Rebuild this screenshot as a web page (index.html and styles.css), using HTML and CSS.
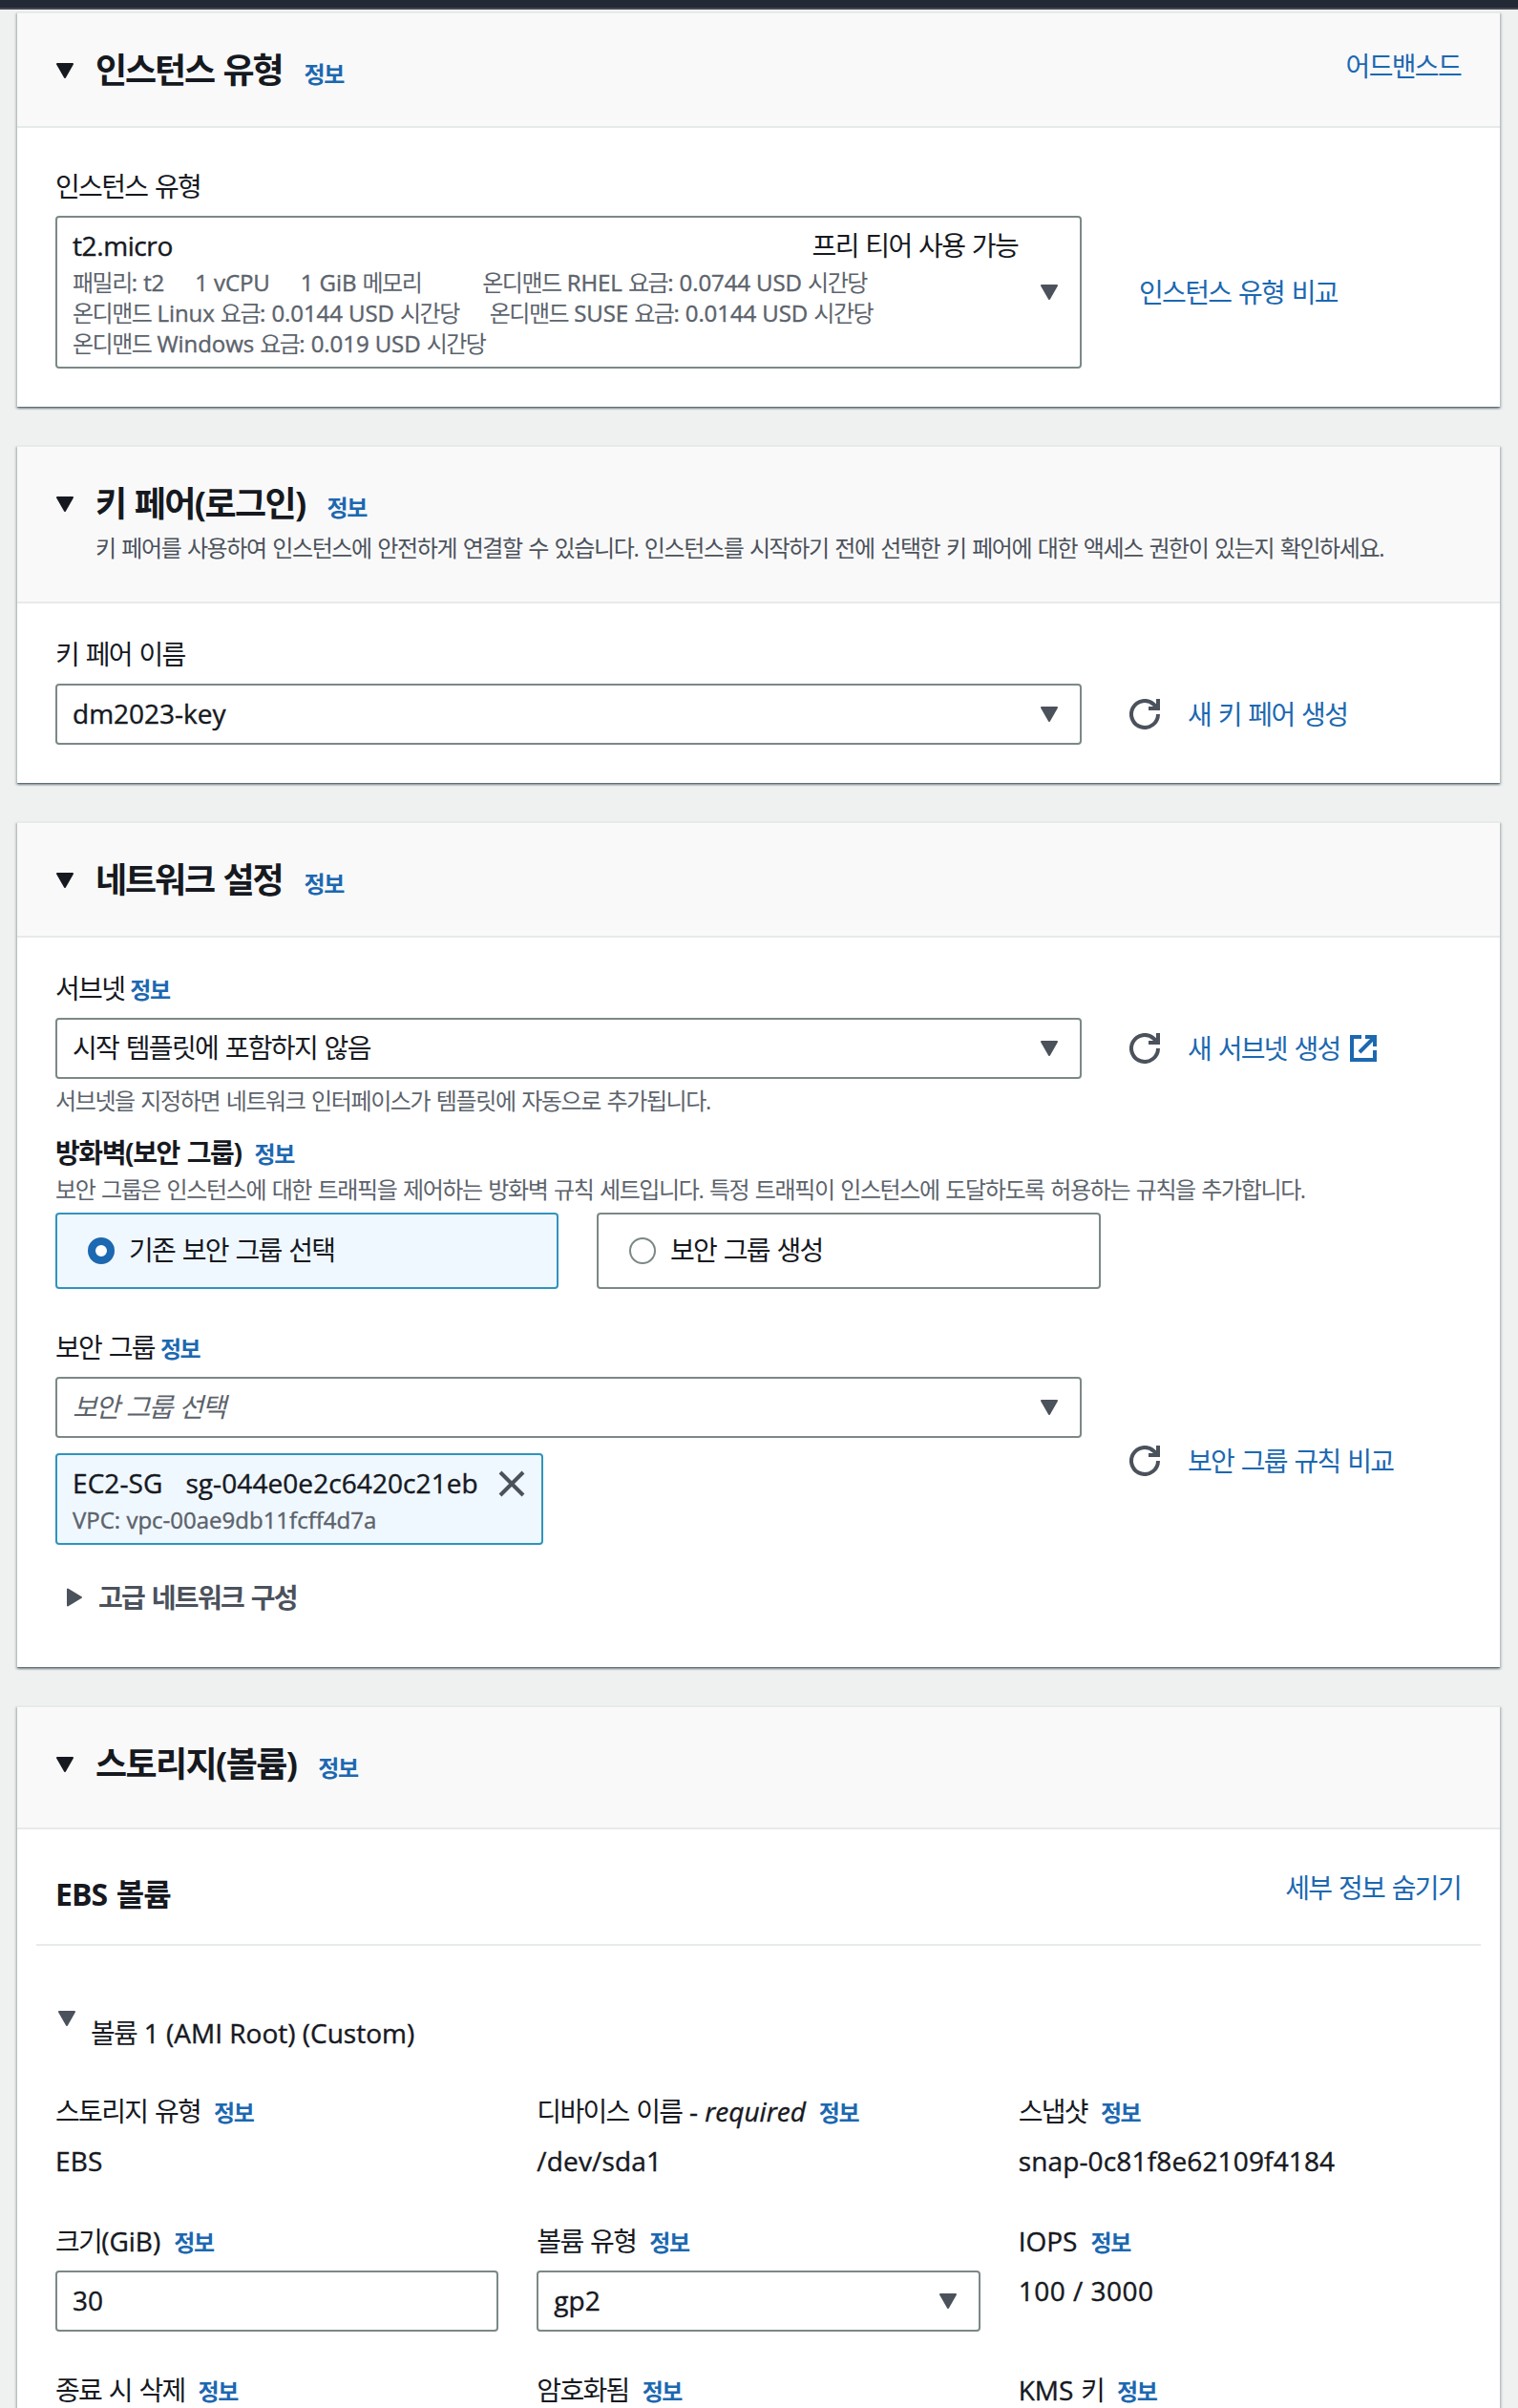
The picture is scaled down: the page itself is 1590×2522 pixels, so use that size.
FILE: index.html
```html
<!DOCTYPE html>
<html lang="ko">
<head>
<meta charset="utf-8">
<title>시작 템플릿 생성</title>
<link rel="stylesheet" href="styles.css">
</head>
<body>
<svg class="sprite" width="0" height="0" aria-hidden="true">
  <symbol id="caret-down" viewBox="0 0 20 16"><path d="M2 1h16l-8 14z" fill="currentColor" stroke="currentColor" stroke-width="2" stroke-linejoin="round"/></symbol>
  <symbol id="caret-right" viewBox="0 0 16 20"><path d="M1 1.5v17L15 10z" fill="currentColor" stroke="currentColor" stroke-width="2" stroke-linejoin="round"/></symbol>
  <symbol id="refresh" viewBox="0 0 32 32"><path d="M30 16a14 14 0 1 1-4.5-10.3L30 10M30 0v10H20" fill="none" stroke="currentColor" stroke-width="4"/></symbol>
  <symbol id="external" viewBox="0 0 28 28"><path d="M12 2H2v24h24V16M16 2h10v10M26 2L10 18" fill="none" stroke="currentColor" stroke-width="4"/></symbol>
  <symbol id="close" viewBox="0 0 28 28"><path d="M2 2l24 24M26 2L2 26" fill="none" stroke="currentColor" stroke-width="4"/></symbol>
</svg>

<div class="topbar"></div>

<main class="page">
  <section class="card">
    <header class="card-header">
      <svg class="caret"><use href="#caret-down"/></svg>
      <h2>인스턴스 유형</h2><a class="info">정보</a>
      <a class="link header-action">어드밴스드</a>
    </header>
    <div class="card-body roomy">
      <div class="label">인스턴스 유형</div>
      <div class="row">
        <div class="select instance">
          <div class="instance-text">
            <div class="instance-title"><span class="en narrow">t2.micro</span><span>프리 티어 사용 가능</span></div>
            <div class="specs"><span>패밀리<span class="en">: t2</span></span><span class="en">1 vCPU</span><span class="wide"><span class="en">1 GiB </span>메모리</span><span>온디맨드<span class="en"> RHEL </span>요금<span class="en">: 0.0744 USD </span>시간당</span></div>
            <div class="specs"><span>온디맨드<span class="en"> Linux </span>요금<span class="en">: 0.0144 USD </span>시간당</span><span>온디맨드<span class="en"> SUSE </span>요금<span class="en">: 0.0144 USD </span>시간당</span></div>
            <div class="specs"><span>온디맨드<span class="en"> Windows </span>요금<span class="en">: 0.019 USD </span>시간당</span></div>
          </div>
          <svg class="caret"><use href="#caret-down"/></svg>
        </div>
        <div class="side"><a class="link">인스턴스 유형 비교</a></div>
      </div>
    </div>
  </section>

  <section class="card">
    <header class="card-header described">
      <svg class="caret"><use href="#caret-down"/></svg>
      <h2 class="mixed">키 페어(로그인)</h2><a class="info">정보</a>
      <p class="header-desc">키 페어를 사용하여 인스턴스에 안전하게 연결할 수 있습니다. 인스턴스를 시작하기 전에 선택한 키 페어에 대한 액세스 권한이 있는지 확인하세요.</p>
    </header>
    <div class="card-body">
      <div class="label">키 페어 이름</div>
      <div class="row">
        <div class="select"><span class="en">dm2023-key</span><svg class="caret"><use href="#caret-down"/></svg></div>
        <div class="side"><svg class="refresh"><use href="#refresh"/></svg><a class="link">새 키 페어 생성</a></div>
      </div>
    </div>
  </section>

  <section class="card">
    <header class="card-header">
      <svg class="caret"><use href="#caret-down"/></svg>
      <h2>네트워크 설정</h2><a class="info">정보</a>
    </header>
    <div class="card-body network">
      <div class="label">서브넷<a class="info tight">정보</a></div>
      <div class="row">
        <div class="select"><span>시작 템플릿에 포함하지 않음</span><svg class="caret"><use href="#caret-down"/></svg></div>
        <div class="side"><svg class="refresh"><use href="#refresh"/></svg><a class="link">새 서브넷 생성</a><svg class="external"><use href="#external"/></svg></div>
      </div>
      <p class="help">서브넷을 지정하면 네트워크 인터페이스가 템플릿에 자동으로 추가됩니다.</p>

      <div class="label strong">방화벽(보안 그룹)<a class="info">정보</a></div>
      <p class="help under-label">보안 그룹은 인스턴스에 대한 트래픽을 제어하는 방화벽 규칙 세트입니다. 특정 트래픽이 인스턴스에 도달하도록 허용하는 규칙을 추가합니다.</p>
      <div class="tiles">
        <div class="tile selected"><span class="radio"></span><span>기존 보안 그룹 선택</span></div>
        <div class="tile"><span class="radio"></span><span>보안 그룹 생성</span></div>
      </div>

      <div class="label">보안 그룹<a class="info tight">정보</a></div>
      <div class="row">
        <div class="group-picker">
          <div class="select"><span class="placeholder">보안 그룹 선택</span><svg class="caret"><use href="#caret-down"/></svg></div>
          <div class="token en">
            <div class="token-main"><span>EC2-SG</span><span>sg-044e0e2c6420c21eb</span><svg class="close"><use href="#close"/></svg></div>
            <div class="token-sub">VPC: vpc-00ae9db11fcff4d7a</div>
          </div>
        </div>
        <div class="side"><svg class="refresh"><use href="#refresh"/></svg><a class="link">보안 그룹 규칙 비교</a></div>
      </div>

      <div class="expander"><svg class="caret-right"><use href="#caret-right"/></svg><span>고급 네트워크 구성</span></div>
    </div>
  </section>

  <section class="card">
    <header class="card-header tall">
      <svg class="caret"><use href="#caret-down"/></svg>
      <h2 class="mixed">스토리지(볼륨)</h2><a class="info">정보</a>
    </header>
    <div class="card-body storage">
      <div class="subheader"><h3>EBS 볼륨</h3><a class="link">세부 정보 숨기기</a></div>
      <div class="volume-title"><svg class="caret"><use href="#caret-down"/></svg><span>볼륨 <span class="en">1 (AMI Root) (Custom)</span></span></div>
      <div class="fields">
        <div><div class="label">스토리지 유형<a class="info">정보</a></div><div class="value en">EBS</div></div>
        <div><div class="label">디바이스 이름 <span class="en">- <em>required</em></span><a class="info">정보</a></div><div class="value en">/dev/sda1</div></div>
        <div><div class="label">스냅샷<a class="info">정보</a></div><div class="value en">snap-0c81f8e62109f4184</div></div>
        <div><div class="label">크기<span class="en">(GiB)</span><a class="info">정보</a></div><div class="select input en"><span>30</span></div></div>
        <div><div class="label">볼륨 유형<a class="info">정보</a></div><div class="select en"><span>gp2</span><svg class="caret"><use href="#caret-down"/></svg></div></div>
        <div><div class="label"><span class="en">IOPS</span><a class="info">정보</a></div><div class="value en iops">100 / 3000</div></div>
        <div><div class="label">종료 시 삭제<a class="info">정보</a></div></div>
        <div><div class="label">암호화됨<a class="info">정보</a></div></div>
        <div><div class="label"><span class="en">KMS</span> 키<a class="info">정보</a></div></div>
      </div>
    </div>
  </section>
</main>
</body>
</html>
```
FILE: styles.css
```css
* { box-sizing: border-box; }

html, body { height: 2522px; overflow: hidden; }

body {
  margin: 0;
  background: #eff1f1;
  color: #16191f;
  font-family: "Open Sans", "Noto Sans CJK KR", sans-serif;
  font-size: 28px;
  line-height: 44px;
  letter-spacing: -1.68px;
  word-spacing: 2px;
}

h2, h3, p { margin: 0; }
svg { display: block; flex: none; }
.sprite { position: absolute; }

.info, .help, .header-desc, .specs {
  font-size: 24px;
  letter-spacing: -1.38px;
  word-spacing: 1.7px;
}
.en { letter-spacing: 0; word-spacing: 0; -webkit-text-stroke: 0.4px currentColor; }
.en.narrow { letter-spacing: -0.4px; }

.topbar {
  height: 10px;
  background: #232935;
  border-bottom: 2px solid #434851;
}

.page {
  display: flex;
  flex-direction: column;
  gap: 40px;
  padding: 2px 19px 0 18px;
}

.card {
  background: #fff;
  border-top: 2px solid #e7eaea;
  box-shadow: 0 2px 2px rgba(0, 28, 36, .3), 2px 2px 2px rgba(0, 28, 36, .15), -2px 2px 2px rgba(0, 28, 36, .15), 0 1px 0 rgba(0, 28, 36, .25);
}

.card-header {
  display: flex;
  align-items: baseline;
  height: 120px;
  padding: 38px 40px 0;
  background: #f9f9f9;
  border-bottom: 2px solid #e7eaea;
}
.card-header.described { height: 164px; flex-wrap: wrap; align-content: flex-start; }
.card-header.tall { height: 128px; }
.card-header .caret { margin-right: 22px; align-self: flex-start; margin-top: 14px; }
.card-header h2 {
  font-size: 36px;
  line-height: 44px;
  font-weight: 700;
  letter-spacing: -2.16px;
  word-spacing: 2.5px;
}
.card-header h2.mixed { letter-spacing: -1.6px; word-spacing: 1.5px; }
.card-header .info { margin-left: 23px; }
.card-header .header-action { margin: -5px 1px 0 auto; align-self: flex-start; }
.header-desc {
  width: 100%;
  padding-left: 42px;
  margin-top: 2px;
  line-height: 36px;
  color: #4b525c;
}

.caret { width: 20px; height: 16px; }
.link, .info { color: #1c68b1; }
.info { margin-left: 14px; font-weight: 700; }
.info.tight { margin-left: 6px; }

.card-body { padding: 32px 40px 40px; }
.card-body.roomy { padding-top: 40px; }
.label { height: 44px; line-height: 42px; margin-bottom: 8px; white-space: nowrap; }
.label.strong { font-weight: 700; letter-spacing: -1.4px; }

.row { display: flex; align-items: center; }
.row > .select, .group-picker { width: 1075px; flex: none; }
.side { display: flex; align-items: center; padding-left: 50px; }
.side .link { margin: 0 0 1px 29px; }
.instance + .side { padding-left: 31px; }
.refresh { width: 32px; height: 32px; color: #4b525c; }
.external { width: 28px; height: 28px; margin-left: 10px; color: #1c68b1; }

.select {
  display: flex;
  align-items: center;
  justify-content: space-between;
  height: 64px;
  padding: 0 22px 0 16px;
  border: 2px solid #7c8888;
  border-radius: 4px;
  background: #fff;
}
.select > span, .tile > span:last-child { margin-bottom: 2px; }
.select .caret { color: #4b525c; }
.placeholder { color: #5c636c; font-style: italic; }

.select.instance { height: 160px; }
.instance-text { width: 990px; }
.instance-title {
  display: flex;
  justify-content: space-between;
  height: 44px;
  line-height: 42px;
}
.specs {
  display: flex;
  gap: 32px;
  white-space: pre;
  line-height: 32px;
  letter-spacing: -1.5px;
  color: #5c636c;
}
.specs .en { letter-spacing: -.08px; }
.specs .wide { margin-right: 32px; }

.help { line-height: 36px; color: #5c636c; margin: 5px 0 15px; }
.label.strong { margin-bottom: 0; }
.help.under-label { margin: -2px 0 6px; }

.tiles { display: flex; gap: 40px; margin-bottom: 40px; }
.tile {
  display: flex;
  align-items: center;
  width: 528px;
  height: 80px;
  padding-left: 32px;
  border: 2px solid #7c8888;
  border-radius: 4px;
}
.tile.selected { width: 527px; border-color: #2f94be; background: #f0f8ff; }
.radio {
  width: 28px;
  height: 28px;
  margin-right: 15px;
  border: 2px solid #7c8888;
  border-radius: 50%;
  background: #fff;
}
.selected .radio { border: 8px solid #1c68b1; }

.token {
  width: 511px;
  height: 96px;
  margin-top: 16px;
  padding: 7px 16px;
  border: 2px solid #2f94be;
  border-radius: 4px;
  background: #f0f8ff;
}
.token-main { display: flex; align-items: center; gap: 24px; letter-spacing: .08px; }
.token-sub { font-size: 24px; line-height: 34px; color: #5c636c; }
.close { width: 28px; height: 28px; margin: 2px 0 0 -3px; color: #4b525c; }

.expander {
  display: flex;
  align-items: center;
  margin-top: 33px;
  padding-left: 12px;
  font-weight: 700;
  color: #4b525c;
}
.caret-right { width: 16px; height: 20px; margin-right: 17px; }
.card-body.network { padding-bottom: 51px; }

.card-body.storage { padding: 0 20px; }
.subheader {
  display: flex;
  justify-content: space-between;
  height: 122px;
  padding: 46px 21px 0 20px;
  border-bottom: 2px solid #e7eaea;
}
.subheader .link { margin-top: -7px; }
.subheader h3 {
  font-size: 32px;
  line-height: 44px;
  font-weight: 700;
  letter-spacing: -.9px;
}
.volume-title { display: flex; padding: 69px 20px 0 22px; }
.volume-title .caret { margin: -1px 15px 0 0; color: #4b525c; }
.fields {
  display: grid;
  grid-template-columns: repeat(3, 1fr);
  gap: 40px;
  padding: 39px 20px 40px;
}
.fields .value { height: 44px; line-height: 42px; letter-spacing: .15px; }
.fields .value.iops { letter-spacing: .5px; }
```
